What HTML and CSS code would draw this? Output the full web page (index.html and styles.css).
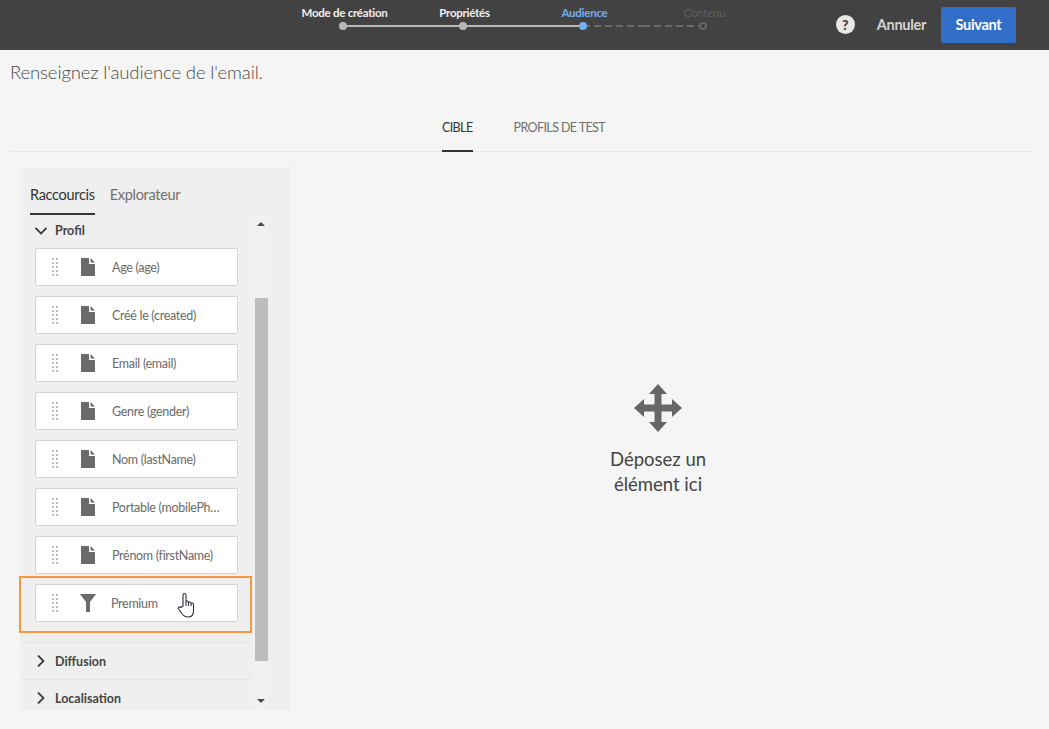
FILE: index.html
```html
<!DOCTYPE html>
<html lang="fr">
<head>
<meta charset="utf-8">
<title>Audience</title>
<link rel="stylesheet" href="styles.css">
</head>
<body>
<header class="topbar">
  <ol class="steps">
    <li class="step done"><span class="step-label">Mode de création</span><span class="step-track"><i class="dot"></i></span></li>
    <li class="step done"><span class="step-label">Propriétés</span><span class="step-track"><i class="dot"></i></span></li>
    <li class="step current"><span class="step-label">Audience</span><span class="step-track"><i class="dot"></i></span></li>
    <li class="step todo"><span class="step-label">Contenu</span><span class="step-track"><i class="dot"></i></span></li>
  </ol>
  <div class="actions">
    <span class="help">?</span>
    <span class="cancel">Annuler</span>
    <button class="next">Suivant</button>
  </div>
</header>
<main class="content">
  <h1 class="title">Renseignez l'audience de l'email.</h1>
  <nav class="tabs">
    <span class="tab active">CIBLE</span>
    <span class="tab">PROFILS DE TEST</span>
  </nav>
  <div class="workspace">
    <aside class="panel">
      <div class="panel-tabs">
        <span class="panel-tab active">Raccourcis</span>
        <span class="panel-tab">Explorateur</span>
      </div>
      <div class="panel-body">
        <div class="list">
          <div class="section-head open">
            <svg class="chev" width="12" height="12" viewBox="0 0 12 12"><path d="M0.500 3 6 8.500 11.500 3" fill="none" stroke="#3c3c3c" stroke-width="1.800"/></svg>
            <span>Profil</span>
          </div>
          <div class="cards">
            <div class="card"><i class="grip"></i><svg class="doc" width="14" height="18" viewBox="0 0 14 18"><path d="M0 0H8V6H14V18H0Z M9.500 0 14 4.500H9.500Z" fill="#6b6b6b"/></svg><span>Age (age)</span></div>
            <div class="card"><i class="grip"></i><svg class="doc" width="14" height="18" viewBox="0 0 14 18"><path d="M0 0H8V6H14V18H0Z M9.500 0 14 4.500H9.500Z" fill="#6b6b6b"/></svg><span>Créé le (created)</span></div>
            <div class="card"><i class="grip"></i><svg class="doc" width="14" height="18" viewBox="0 0 14 18"><path d="M0 0H8V6H14V18H0Z M9.500 0 14 4.500H9.500Z" fill="#6b6b6b"/></svg><span>Email (email)</span></div>
            <div class="card"><i class="grip"></i><svg class="doc" width="14" height="18" viewBox="0 0 14 18"><path d="M0 0H8V6H14V18H0Z M9.500 0 14 4.500H9.500Z" fill="#6b6b6b"/></svg><span>Genre (gender)</span></div>
            <div class="card"><i class="grip"></i><svg class="doc" width="14" height="18" viewBox="0 0 14 18"><path d="M0 0H8V6H14V18H0Z M9.500 0 14 4.500H9.500Z" fill="#6b6b6b"/></svg><span>Nom (lastName)</span></div>
            <div class="card"><i class="grip"></i><svg class="doc" width="14" height="18" viewBox="0 0 14 18"><path d="M0 0H8V6H14V18H0Z M9.500 0 14 4.500H9.500Z" fill="#6b6b6b"/></svg><span>Portable (mobilePh…</span></div>
            <div class="card"><i class="grip"></i><svg class="doc" width="14" height="18" viewBox="0 0 14 18"><path d="M0 0H8V6H14V18H0Z M9.500 0 14 4.500H9.500Z" fill="#6b6b6b"/></svg><span>Prénom (firstName)</span></div>
            <div class="highlight">
              <div class="card filter"><i class="grip"></i><svg class="funnel" width="16" height="18" viewBox="0 0 16 18"><path d="M0 0H16L10 8V18H6V8Z" fill="#6b6b6b"/></svg><span>Premium</span>
                <svg class="hand" width="18" height="26" viewBox="0 0 18 26"><path d="M6 14V3C6 1 9 1 9 3V10C9 8.500 11.500 8.500 11.500 10.500V11C11.500 9.500 14 9.500 14 11.500V12C14 10.500 16.500 10.500 16.500 12.500V19C16.500 23 14.500 25 11 25C7.500 25 6 23.500 4.500 21L1.500 17C0.500 15.500 2.500 14 4 15.500Z" fill="#fff" stroke="#2c3040" stroke-width="1.100" stroke-linejoin="round"/><path d="M9 10V14M11.500 11V14M14 12V14" stroke="#2c3040" stroke-width="1" fill="none"/></svg>
              </div>
            </div>
          </div>
          <div class="section-head closed">
            <svg class="chev" width="12" height="12" viewBox="0 0 12 12"><path d="M3 0.500 8.500 6 3 11.500" fill="none" stroke="#3c3c3c" stroke-width="1.800"/></svg>
            <span>Diffusion</span>
          </div>
          <div class="section-head closed">
            <svg class="chev" width="12" height="12" viewBox="0 0 12 12"><path d="M3 0.500 8.500 6 3 11.500" fill="none" stroke="#3c3c3c" stroke-width="1.800"/></svg>
            <span>Localisation</span>
          </div>
        </div>
        <div class="scrollbar">
          <i class="arrow up"></i>
          <i class="thumb"></i>
          <i class="arrow down"></i>
        </div>
      </div>
    </aside>
    <section class="dropzone">
      <svg width="50" height="50" viewBox="0 0 50 50"><path d="M25 1 34 11H28.500V21.500H39V16L49 25 39 34V28.500H28.500V39H34L25 49 16 39H21.500V28.500H11V34L1 25 11 16V21.500H21.500V11H16Z" fill="#666"/></svg>
      <p class="drop-text">Déposez un<br>élément ici</p>
    </section>
  </div>
</main>
</body>
</html>
```
FILE: styles.css
```css
* { box-sizing: border-box; }
html, body { margin: 0; padding: 0; height: 100%; }
body {
  background: #f5f5f5;
  font-family: "Lato", "Liberation Sans", sans-serif;
  color: #4b4b4b;
  overflow: hidden;
}
.topbar {
  height: 50px;
  background: #424242;
  display: flex;
  justify-content: space-between;
  padding-left: 283px;
  padding-right: 33px;
}
.steps {
  list-style: none;
  margin: 0;
  padding: 5px 0 0;
  display: grid;
  grid-template-columns: repeat(4, 120px);
}
.step { display: flex; flex-direction: column; align-items: center; }
.step-label {
  font-size: 11.5px;
  line-height: 15px;
  font-weight: 700;
  letter-spacing: -0.25px;
  padding-left: 3px;
  color: #f0f0f0;
  white-space: nowrap;
}
.step.current .step-label { color: #78aef0; }
.step.todo .step-label { color: #5f5f5f; font-weight: 400; }
.step-track {
  width: 120px;
  height: 8px;
  margin-top: 2px;
  display: flex;
  justify-content: center;
  align-items: center;
  background: linear-gradient(#b8b8b8, #b8b8b8) no-repeat right center / 50% 2px;
}
.step:nth-child(2) .step-track {
  background: linear-gradient(#b8b8b8, #b8b8b8) no-repeat center / 100% 2px;
}
.step:nth-child(3) .step-track {
  background:
    linear-gradient(#b8b8b8, #b8b8b8) no-repeat left center / 50% 2px,
    repeating-linear-gradient(90deg, #6a6a6a 0 7px, transparent 7px 11px) no-repeat right center / 50% 2px;
}
.step:nth-child(4) .step-track {
  background: repeating-linear-gradient(90deg, #6a6a6a 0 7px, transparent 7px 11px) no-repeat left center / 50% 2px;
}
.dot {
  display: block;
  width: 8px;
  height: 8px;
  border-radius: 50%;
  background: #b8b8b8;
}
.step.current .dot { background: #78aef0; }
.step.todo .dot { background: #424242; border: 2px solid #666; }
.actions { display: flex; align-items: center; }
.help {
  width: 19px;
  height: 19px;
  margin-bottom: 2px;
  border-radius: 50%;
  background: #e8e8e8;
  color: #424242;
  font-size: 14px;
  font-weight: 900;
  line-height: 19px;
  text-align: center;
}
.cancel {
  margin-left: 22px;
  margin-bottom: 2px;
  font-size: 14.5px;
  font-weight: 700;
  letter-spacing: -0.3px;
  color: #d4d4d4;
}
.next {
  margin-left: 15px;
  width: 75px;
  height: 36px;
  border: 0;
  border-radius: 2px;
  background: #326ec8;
  color: #fff;
  font-family: inherit;
  font-size: 14.5px;
  font-weight: 700;
  letter-spacing: -0.3px;
  padding: 0 0 2px;
}
.content { padding: 0 14px 0 10px; }
.title {
  margin: 0;
  height: 49px;
  padding-top: 10px;
  font-size: 18.5px;
  line-height: 24px;
  font-weight: 300;
  letter-spacing: -0.12px;
  color: #4a4a4a;
}
.tabs {
  height: 53px;
  border-bottom: 1px solid #e6e6e6;
  display: flex;
  justify-content: center;
  gap: 41px;
  padding-left: 2px;
}
.tab {
  padding-top: 21px;
  font-size: 12.5px;
  line-height: 16px;
  letter-spacing: -0.6px;
  color: #707070;
}
.tab.active { color: #333; border-bottom: 2px solid #333; height: 53px; }
.workspace {
  display: flex;
  padding: 15px 0 0 10px;
}
.panel {
  width: 270px;
  height: 543px;
  background: #efefef;
  flex: none;
}
.panel-tabs {
  height: 48px;
  padding: 19px 0 0 10px;
  display: flex;
  gap: 15px;
}
.panel-tab {
  font-size: 14.5px;
  line-height: 18px;
  letter-spacing: -0.3px;
  color: #707070;
  height: 29px;
}
.panel-tab.active { color: #333; border-bottom: 2px solid #333; }
.panel-body { display: flex; height: 495px; }
.list { width: 233px; flex: none; }
.section-head {
  display: flex;
  align-items: center;
  gap: 8px;
  padding-left: 15px;
  font-size: 12.5px;
  font-weight: 700;
  color: #444;
}
.section-head.open { height: 31px; margin-bottom: 2px; }
.section-head.closed { height: 37px; border-top: 1px solid #e6e6e6; }
.cards { display: flex; flex-direction: column; gap: 10px; padding-left: 15px; }
.card {
  width: 203px;
  height: 38px;
  flex: none;
  background: #fff;
  border: 1px solid #d4d4d4;
  border-radius: 2px;
  display: flex;
  align-items: center;
  padding-left: 16px;
  font-size: 12.5px;
  letter-spacing: -0.3px;
  color: #6a6a6a;
  position: relative;
}
.card span {
  margin-left: 17px;
  white-space: nowrap;
}
.card.filter span { margin-left: 15px; }
.grip {
  width: 6px;
  height: 18px;
  flex: none;
  background: conic-gradient(#bdbdbd 25%, transparent 0) -2px 0 / 4px 4px;
}
.doc { margin-left: 23px; flex: none; }
.funnel { margin-left: 22px; flex: none; }
.highlight {
  width: 233px;
  height: 57px;
  margin-left: -16px;
  margin-top: -8px;
  margin-bottom: 9px;
  padding: 6px 0 0 14px;
  border: 2px solid #f39a3e;
}
.hand {
  position: absolute;
  left: 141px;
  top: 7px;
}
.scrollbar {
  width: 15px;
  flex: none;
  display: flex;
  flex-direction: column;
  align-items: center;
  background: #f1f1f1;
}
.thumb {
  display: block;
  width: 13px;
  height: 363px;
  margin: 72px 0 0 0;
  align-self: flex-end;
  background: #bdbdbd;
}
.arrow {
  display: block;
  width: 0;
  height: 0;
  border-left: 4px solid transparent;
  border-right: 4px solid transparent;
}
.arrow.up { margin-top: 7px; border-bottom: 4px solid #4a4a4a; }
.arrow.down { margin-top: 38px; border-top: 4px solid #4a4a4a; }
.dropzone {
  flex: 1;
  height: 543px;
  display: flex;
  flex-direction: column;
  align-items: center;
  padding-top: 216px;
  padding-right: 9px;
}
.drop-text {
  margin: 14px 0 0;
  font-size: 18.5px;
  line-height: 25px;
  text-align: center;
  color: #444;
}
```
